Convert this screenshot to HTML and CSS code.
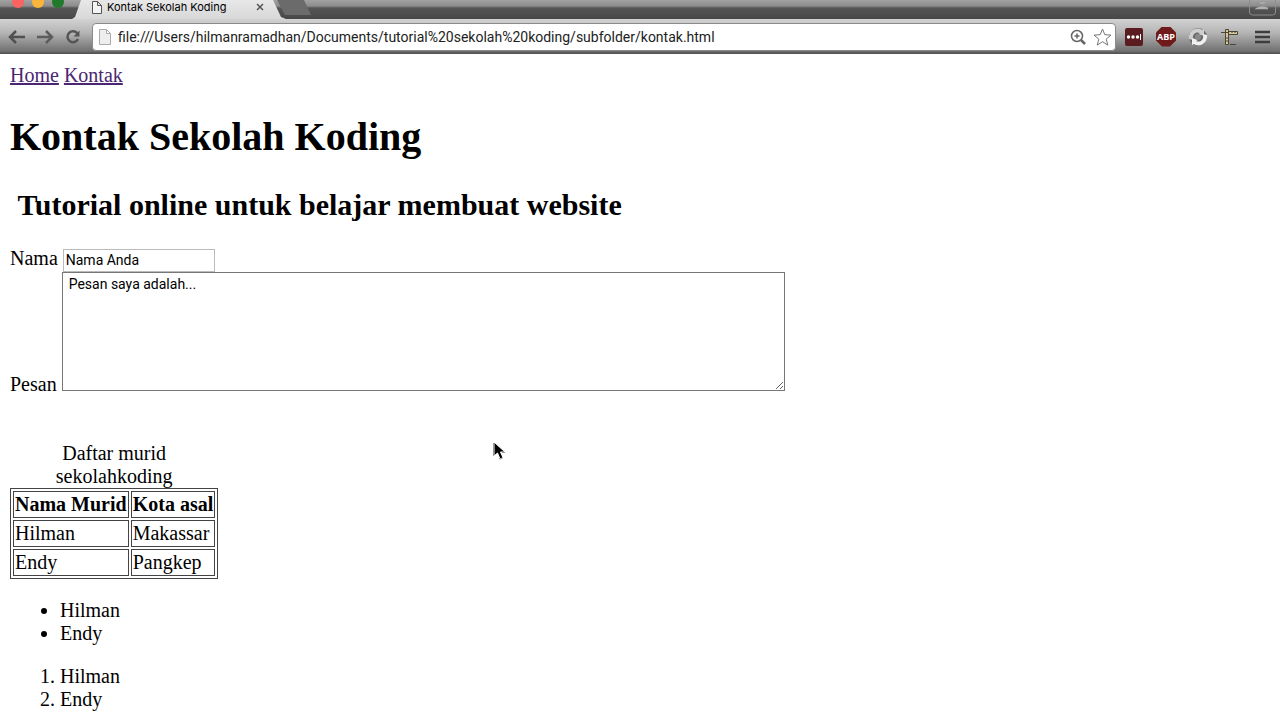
FILE: index.html
```
<!DOCTYPE html>
<html lang="id">
<head>
    <meta charset="UTF-8">
    <meta name="viewport" content="width=device-width, initial-scale=1.0">
    <title>Kontak Sekolah Koding</title>
    <link rel="stylesheet" href="styles.css">
</head>
<body>
    <header class="browser">
        <div class="tab-strip">
            <svg class="window-buttons" width="72" height="19" viewBox="0 0 72 19">
                <circle cx="18" cy="2" r="6" fill="#f96361"/>
                <circle cx="38" cy="2" r="6" fill="#fbb53a"/>
                <circle cx="58" cy="2" r="6" fill="#1f7a2c"/>
            </svg>
            <div class="tab">
                <svg width="10" height="13" viewBox="0 0 10 13" fill="#f4f4f4" stroke="#555">
                    <path d="M.5.5h5l4 4v8h-9zM5.5.5v4h4"/>
                </svg>
                <span class="tab-title">Kontak Sekolah Koding</span>
                <button class="icon-btn" aria-label="Close tab">
                    <svg width="8" height="8" viewBox="0 0 8 8" stroke="#555" stroke-width="1.5">
                        <path d="M1 1l6 6M7 1L1 7"/>
                    </svg>
                </button>
            </div>
            <button class="new-tab" aria-label="New tab"></button>
            <button class="profile-btn" aria-label="Profile">
                <svg width="27" height="16" viewBox="0 0 27 16" fill="none" stroke="#8c8c8c">
                    <path d="M.5 0v12q0 3 3 3h20q3 0 3-3V0"/>
                    <path d="M8 8.500q5-3 11 0zM11 3h5" stroke="#b0b0b0" stroke-width="1.500"/>
                </svg>
            </button>
        </div>
        <div class="toolbar">
            <nav class="nav-buttons">
                <button class="icon-btn" aria-label="Back">
                    <svg width="18" height="16" viewBox="0 0 18 16" fill="none" stroke="#505050" stroke-width="2.500">
                        <path d="M8 2L2 8l6 6M2 8h15"/>
                    </svg>
                </button>
                <button class="icon-btn" aria-label="Forward">
                    <svg width="18" height="16" viewBox="0 0 18 16" fill="none" stroke="#5c5c5c" stroke-width="2.500">
                        <path d="M10 2l6 6-6 6M16 8H1"/>
                    </svg>
                </button>
                <button class="icon-btn" aria-label="Reload">
                    <svg width="18" height="16" viewBox="0 0 18 16" fill="none" stroke="#555" stroke-width="2.500">
                        <path d="M13.500 4.500A5.500 5.500 0 1 0 14 10"/>
                        <path d="M15.500 1.500v6h-6z" fill="#555" stroke="none"/>
                    </svg>
                </button>
            </nav>
            <div class="address-bar">
                <svg width="12" height="16" viewBox="0 0 12 16" fill="#eee" stroke="#aaa">
                    <path d="M.5.5h7l4 4v11h-11zM7.500.5v4h4"/>
                </svg>
                <input class="address" type="text" aria-label="Address" value="file:///Users/hilmanramadhan/Documents/tutorial%20sekolah%20koding/subfolder/kontak.html">
                <button class="icon-btn" aria-label="Zoom">
                    <svg width="16" height="16" viewBox="0 0 16 16" fill="none" stroke="#666" stroke-width="1.500">
                        <circle cx="7" cy="7" r="5.500"/>
                        <path d="M4.500 7h5M7 4.500v5"/>
                        <path d="M11 11l4 4" stroke-width="2.500"/>
                    </svg>
                </button>
                <button class="icon-btn" aria-label="Bookmark">
                    <svg width="19" height="18" viewBox="0 0 19 18" fill="#fff" stroke="#777">
                        <path d="M9.500 1l2.300 5.700 6.200.4-4.800 4 1.600 6-5.300-3.400-5.300 3.400 1.600-6-4.800-4 6.200-.4z"/>
                    </svg>
                </button>
            </div>
            <div class="extensions">
                <button class="icon-btn" aria-label="Password manager">
                    <svg width="20" height="20" viewBox="0 0 20 20">
                        <rect x="1" y="1" width="18" height="18" rx="2" fill="#5a1c20"/>
                        <g fill="#fff">
                            <circle cx="4.500" cy="10" r="1.700"/>
                            <circle cx="9" cy="10" r="1.700"/>
                            <circle cx="13.500" cy="10" r="1.700"/>
                            <path d="M16 7h1v6h-1z"/>
                        </g>
                    </svg>
                </button>
                <button class="icon-btn abp">ABP</button>
                <button class="icon-btn" aria-label="Sync">
                    <svg width="20" height="20" viewBox="0 0 20 20">
                        <circle cx="10" cy="10" r="9" fill="#6a6a6a"/>
                        <path d="M1 12C0 4 8-1 14 3l2-1v7l-6-2 2-1C7 4 4 8 5 13z" fill="#cfcfcf"/>
                        <path d="M19 8c1 8-7 13-13 9l-2 1v-7l6 2-2 1c5 2 8-2 7-7z" fill="#f0f0f0"/>
                        <circle cx="10" cy="10" r="3" fill="#8a8a8a"/>
                    </svg>
                </button>
                <button class="icon-btn" aria-label="Ruler">
                    <svg width="20" height="20" viewBox="0 0 20 20" stroke="#4b4538">
                        <path d="M5.500 4.500h12v3h-12z" fill="#d8c999"/>
                        <path d="M5.500 2.500h3v15h-3z" fill="#d8c999"/>
                        <path d="M1 5.500h7M12 4v2M15 4v2M6 11h2M6 14h2M10 17.500h6" fill="none"/>
                    </svg>
                </button>
                <button class="icon-btn" aria-label="Menu">
                    <svg width="20" height="20" viewBox="0 0 20 20" stroke="#3d3d3d" stroke-width="2.500">
                        <path d="M3 5h15M3 10h15M3 15h15"/>
                    </svg>
                </button>
            </div>
        </div>
    </header>

    <main class="page">
        <a href="#home">Home</a>
        <a href="#kontak">Kontak</a>

        <h1>Kontak Sekolah Koding</h1>
        <h2>&nbsp;Tutorial online untuk belajar membuat website</h2>

        <form>
            <label for="nama">Nama</label>
            <input type="text" id="nama" value="Nama Anda">
            <br>
            <label for="pesan">Pesan</label>
            <textarea id="pesan">Pesan saya adalah...</textarea>
        </form>
        <br>
        <br>

        <table>
            <caption>Daftar murid sekolahkoding</caption>
            <tr>
                <th>Nama Murid</th>
                <th>Kota asal</th>
            </tr>
            <tr>
                <td>Hilman</td>
                <td>Makassar</td>
            </tr>
            <tr>
                <td>Endy</td>
                <td>Pangkep</td>
            </tr>
        </table>

        <ul>
            <li>Hilman</li>
            <li>Endy</li>
        </ul>

        <ol>
            <li>Hilman</li>
            <li>Endy</li>
        </ol>
    </main>

    <svg class="cursor" width="13" height="19" viewBox="0 0 13 19">
        <path d="M1 1v14l3.500-3 2.500 6 3-1.500-2.500-5.500H12z" fill="#000" stroke="#fff"/>
        <path d="M.5 2v13M6 17.500l2 .5 2-1.500M9 11.500h3" fill="none" stroke="#999"/>
    </svg>
</body>
</html>
```

FILE: styles.css
```
body {
    margin: 0;
    background-color: #fff;
    color: #000;
    font-family: "Liberation Serif", "Times New Roman", serif;
    font-size: 20px;
    line-height: 23px;
}

/* Browser window */
.tab-strip {
    display: flex;
    height: 19px;
    background: linear-gradient(#a2a2a2, #8c8c8c 6px, #555 8px, #474747);
}

.tab {
    display: flex;
    align-items: center;
    box-sizing: border-box;
    width: 214px;
    height: 19px;
    padding: 0 22px 5px 20px;
    background: linear-gradient(#e8e8e8, #d8d8d8);
    clip-path: polygon(9px 0, 201px 0, 209px 17px, 214px 100%, 0 100%, 3px 17px);
}

.tab-title {
    flex: 1;
    margin-left: 5px;
    font-family: Inter, sans-serif;
    font-size: 11px;
    line-height: 14px;
    white-space: nowrap;
}

.icon-btn {
    display: flex;
    padding: 0;
    border: none;
    background: none;
}

.new-tab {
    width: 34px;
    height: 15px;
    margin-left: -9px;
    padding: 0;
    border: none;
    background-color: #6b6b6b;
    clip-path: polygon(0 0, 27px 0, 34px 100%, 8px 100%);
}

.profile-btn {
    display: flex;
    margin-left: auto;
    margin-right: 4px;
    padding: 0;
    border: none;
    background: none;
}

.toolbar {
    display: flex;
    align-items: center;
    gap: 8px;
    box-sizing: border-box;
    height: 35px;
    padding: 1px 8px 0;
    border-bottom: 1px solid #555;
    background: linear-gradient(#d2d2d2, #b5b5b5 40%, #707070 95%, #555);
}

.nav-buttons {
    display: flex;
    gap: 10px;
    margin-right: 2px;
}

.address-bar {
    display: flex;
    flex: 1;
    align-items: center;
    gap: 7px;
    box-sizing: border-box;
    height: 28px;
    padding: 0 3px 0 6px;
    border: 1px solid #8a8a8a;
    border-radius: 4px;
    background-color: #fff;
}

.address {
    flex: 1;
    min-width: 0;
    padding: 0;
    border: none;
    background: none;
    color: #222;
    font-family: Roboto, sans-serif;
    font-size: 14px;
}

.extensions {
    display: flex;
    gap: 12px;
}

.abp {
    align-items: center;
    justify-content: center;
    width: 20px;
    height: 20px;
    background-color: #6e1a1a;
    color: #fff;
    clip-path: polygon(30% 0, 70% 0, 100% 30%, 100% 70%, 70% 100%, 30% 100%, 0 70%, 0 30%);
    font-family: "Open Sans", sans-serif;
    font-size: 9px;
    font-weight: bold;
}

/* Page */
.page {
    padding: 10px 10px 0;
}

a {
    color: #4b2673;
}

h1 {
    margin: 27px 0;
    font-size: 40px;
    line-height: 46px;
}

h2 {
    margin: 25px 0;
    font-size: 30px;
    line-height: 35px;
}

#nama {
    box-sizing: border-box;
    width: 152px;
    height: 23px;
    padding: 1px 2px;
    border: 1px solid #bbb;
    font-family: Roboto, sans-serif;
    font-size: 14px;
}

#pesan {
    box-sizing: border-box;
    width: 723px;
    max-width: 90%;
    height: 119px;
    padding: 3px 6px;
    border: 1px solid #777;
    font-family: Roboto, sans-serif;
    font-size: 14px;
    line-height: 16px;
}

table, th, td {
    border: 1px solid #444;
}

table {
    border-spacing: 2px;
}

th, td {
    padding: 1px;
}

ul, ol {
    margin: 20px 0 0;
    padding-left: 50px;
}

.cursor {
    position: absolute;
    top: 441px;
    left: 493px;
}
```
